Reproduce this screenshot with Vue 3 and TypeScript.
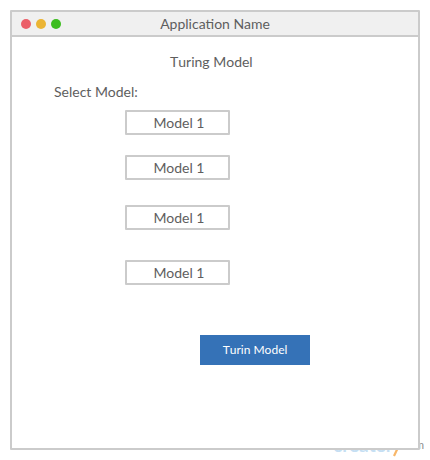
<script setup lang="ts">
const title: string = 'Application Name'
const lights: string[] = ['red', 'amber', 'green']
const models: string[] = ['Model 1', 'Model 1', 'Model 1', 'Model 1']
</script>

<template>
  <div class="page">
    <div class="watermark">
      <span class="brand">createl<svg class="tail" viewBox="0 0 12 20"><path d="M1 4 L5 12 M11 4 L4 19" /></svg></span>
      <span class="domain">.com</span>
    </div>
    <main class="window">
      <header class="titlebar">
        <div class="lights">
          <i v-for="c in lights" :key="c" :class="c"></i>
        </div>
        <span>{{ title }}</span>
      </header>
      <h1>Turing Model</h1>
      <p class="label">Select Model:</p>
      <div class="models">
        <button v-for="(m, i) in models" :key="i" class="model">{{ m }}</button>
      </div>
      <button class="submit">Turin Model</button>
    </main>
  </div>
</template>

<style>
body {
  margin: 0;
  background: #fff;
}
</style>

<style scoped>
.page {
  position: relative;
  box-sizing: border-box;
  width: 430px;
  height: 460px;
  padding: 10px;
  overflow: hidden;
  font-family: Lato, sans-serif;
  font-size: 14px;
  line-height: 18px;
  color: #5e5e5e;
}
.window {
  position: relative;
  box-sizing: border-box;
  display: flex;
  flex-direction: column;
  width: 410px;
  height: 440px;
  border: 2px solid #cbcbcb;
  border-radius: 1px;
  background: #fff;
}
.titlebar {
  box-sizing: border-box;
  display: grid;
  grid-template-columns: 1fr auto 1fr;
  align-items: center;
  height: 25px;
  flex: none;
  border-bottom: 2px solid #cbcbcb;
  background: #f0f0f0;
}
.titlebar span {
  padding-top: 1px;
}
.lights {
  display: flex;
  gap: 5px;
  padding-left: 9px;
}
.lights i {
  width: 10px;
  height: 10px;
  border-radius: 50%;
}
.red {
  background: #eb5f69;
}
.amber {
  background: #ebb434;
}
.green {
  background: #3cbd1e;
}
h1 {
  margin: 16px 0 0;
  padding-left: 158px;
  font-size: 14px;
  font-weight: 400;
  font-kerning: none;
}
.label {
  margin: 12px 0 0 42px;
}
.models {
  display: grid;
  grid-template-rows: 45px 50px 55px 25px;
  margin: 9px 0 0 113px;
}
.model {
  box-sizing: border-box;
  width: 105px;
  height: 25px;
  padding: 1px 0 0 3px;
  border: 2px solid #cbcbcb;
  border-radius: 1px;
  background: #fff;
  color: inherit;
  font: inherit;
}
.submit {
  width: 110px;
  height: 30px;
  margin: 50px 0 0 188px;
  padding: 0;
  border: 0;
  background: #3572b7;
  color: #fff;
  font: 12px/18px Lato, sans-serif;
  font-kerning: none;
}
.watermark {
  position: absolute;
  left: 333px;
  top: 434px;
  display: flex;
  width: 91px;
  height: 24px;
  line-height: 22px;
}
.brand {
  display: flex;
  font-size: 19px;
  font-weight: 700;
  color: #c6dff3;
}
.tail {
  width: 12px;
  height: 20px;
  margin: 3px 0 0 -1px;
  fill: none;
  stroke: #f8b769;
  stroke-width: 2.2;
}
.domain {
  position: absolute;
  right: 0;
  top: 0;
  font-size: 11px;
  color: #8b8b8b;
}
</style>
